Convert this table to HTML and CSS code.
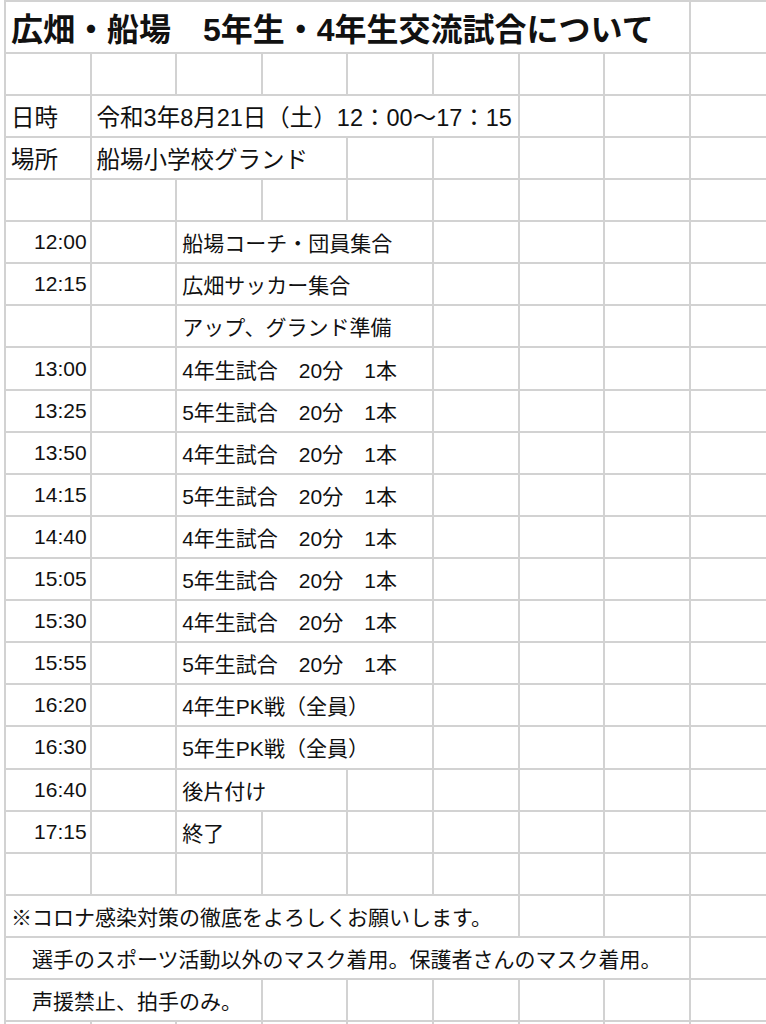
FILE: index.html
```html
<!DOCTYPE html>
<html lang="ja">
<head>
<meta charset="utf-8">
<title>広畑・船場　5年生・4年生交流試合について</title>
<link rel="stylesheet" href="styles.css">
</head>
<body>
<div class="sheet">
  <div class="c title s8">広畑・船場　5年生・4年生交流試合について</div><div class="c"></div>

  <div class="c"></div><div class="c"></div><div class="c"></div><div class="c"></div><div class="c"></div><div class="c"></div><div class="c"></div><div class="c"></div><div class="c"></div>

  <div class="c big">日時</div><div class="c big s5">令和3年8月21日（土）12：00～17：15</div><div class="c"></div><div class="c"></div><div class="c"></div>

  <div class="c big">場所</div><div class="c big s3">船場小学校グランド</div><div class="c"></div><div class="c"></div><div class="c"></div><div class="c"></div><div class="c"></div>

  <div class="c"></div><div class="c"></div><div class="c"></div><div class="c"></div><div class="c"></div><div class="c"></div><div class="c"></div><div class="c"></div><div class="c"></div>

  <div class="c t">12:00</div><div class="c"></div><div class="c s3">船場コーチ・団員集合</div><div class="c"></div><div class="c"></div><div class="c"></div><div class="c"></div>
  <div class="c t">12:15</div><div class="c"></div><div class="c s3">広畑サッカー集合</div><div class="c"></div><div class="c"></div><div class="c"></div><div class="c"></div>
  <div class="c t"></div><div class="c"></div><div class="c s3">アップ、グランド準備</div><div class="c"></div><div class="c"></div><div class="c"></div><div class="c"></div>
  <div class="c t">13:00</div><div class="c"></div><div class="c s3">4年生試合　20分　1本</div><div class="c"></div><div class="c"></div><div class="c"></div><div class="c"></div>
  <div class="c t">13:25</div><div class="c"></div><div class="c s3">5年生試合　20分　1本</div><div class="c"></div><div class="c"></div><div class="c"></div><div class="c"></div>
  <div class="c t">13:50</div><div class="c"></div><div class="c s3">4年生試合　20分　1本</div><div class="c"></div><div class="c"></div><div class="c"></div><div class="c"></div>
  <div class="c t">14:15</div><div class="c"></div><div class="c s3">5年生試合　20分　1本</div><div class="c"></div><div class="c"></div><div class="c"></div><div class="c"></div>
  <div class="c t">14:40</div><div class="c"></div><div class="c s3">4年生試合　20分　1本</div><div class="c"></div><div class="c"></div><div class="c"></div><div class="c"></div>
  <div class="c t">15:05</div><div class="c"></div><div class="c s3">5年生試合　20分　1本</div><div class="c"></div><div class="c"></div><div class="c"></div><div class="c"></div>
  <div class="c t">15:30</div><div class="c"></div><div class="c s3">4年生試合　20分　1本</div><div class="c"></div><div class="c"></div><div class="c"></div><div class="c"></div>
  <div class="c t">15:55</div><div class="c"></div><div class="c s3">5年生試合　20分　1本</div><div class="c"></div><div class="c"></div><div class="c"></div><div class="c"></div>
  <div class="c t">16:20</div><div class="c"></div><div class="c s3">4年生PK戦（全員）</div><div class="c"></div><div class="c"></div><div class="c"></div><div class="c"></div>
  <div class="c t">16:30</div><div class="c"></div><div class="c s3">5年生PK戦（全員）</div><div class="c"></div><div class="c"></div><div class="c"></div><div class="c"></div>
  <div class="c t">16:40</div><div class="c"></div><div class="c s2">後片付け</div><div class="c"></div><div class="c"></div><div class="c"></div><div class="c"></div><div class="c"></div>
  <div class="c t">17:15</div><div class="c"></div><div class="c">終了</div><div class="c"></div><div class="c"></div><div class="c"></div><div class="c"></div><div class="c"></div><div class="c"></div>

  <div class="c"></div><div class="c"></div><div class="c"></div><div class="c"></div><div class="c"></div><div class="c"></div><div class="c"></div><div class="c"></div><div class="c"></div>

  <div class="c s6">※コロナ感染対策の徹底をよろしくお願いします。</div><div class="c"></div><div class="c"></div><div class="c"></div>
  <div class="c s8">　選手のスポーツ活動以外のマスク着用。保護者さんのマスク着用。</div><div class="c"></div>
  <div class="c s3">　声援禁止、拍手のみ。</div><div class="c"></div><div class="c"></div><div class="c"></div><div class="c"></div><div class="c"></div><div class="c"></div>

  <div class="c"></div><div class="c"></div><div class="c"></div><div class="c"></div><div class="c"></div><div class="c"></div><div class="c"></div><div class="c"></div><div class="c"></div>
</div>
</body>
</html>
```

FILE: styles.css
```css
html, body {
  margin: 0;
  padding: 0;
  background: #ffffff;
  overflow: hidden;
}

body {
  width: 766px;
  height: 1024px;
  font-family: "Liberation Sans", "Noto Sans CJK JP", sans-serif;
  color: #111111;
}

.sheet {
  display: grid;
  grid-template-columns: repeat(9, 83.6px);
  grid-template-rows: 49.7px repeat(24, 40.12px);
  gap: 2px;
  padding: 2px 0 0 2px;
  margin-left: 4px;
  background: #d2d2d2;
  width: max-content;
}

.c {
  background: #ffffff;
  display: flex;
  align-items: center;
  padding: 0 4px 0 5px;
  font-size: 21px;
  white-space: nowrap;
  overflow: hidden;
  min-width: 0;
}

.s2 { grid-column: span 2; }
.s3 { grid-column: span 3; }
.s5 { grid-column: span 5; }
.s6 { grid-column: span 6; }
.s8 { grid-column: span 8; }

.t {
  justify-content: flex-end;
  padding-right: 3px;
}

.big {
  font-size: 23.5px;
}

.title {
  font-size: 32px;
  font-weight: bold;
  padding-left: 5px;
}
```
